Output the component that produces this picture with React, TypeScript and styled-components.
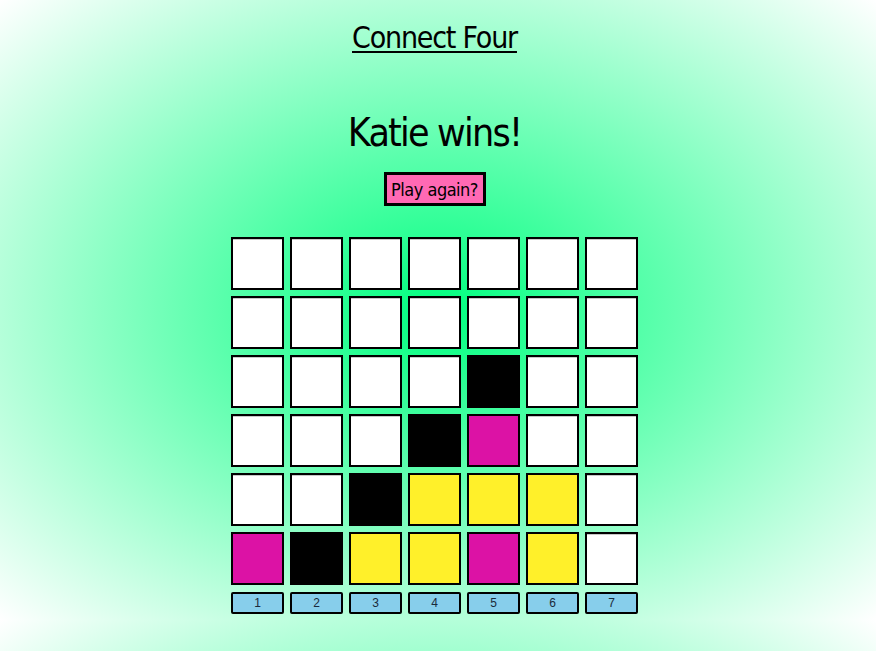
import React from "react";
import styled, { createGlobalStyle } from "styled-components";

const GlobalStyle = createGlobalStyle`
  html {
    min-height: 100%;
    background: radial-gradient(ellipse farthest-corner at 50% 50%, #00ff7f 0%, #ffffff 100%);
    background-size: 100% 620px;
  }
  body {
    margin: 0;
    font-family: "DejaVu Sans", sans-serif;
    font-stretch: condensed;
    color: #000;
  }
`;

const Page = styled.main`
  display: flex;
  flex-direction: column;
  align-items: center;
  padding: 18px 7px 30px 0;
`;

const Title = styled.h1`
  margin: 0;
  font-size: 30px;
  letter-spacing: -1.2px;
  font-weight: 400;
  text-decoration: underline;
  text-decoration-thickness: 2px;
  text-underline-offset: 3px;
  line-height: 40px;
`;

const Status = styled.h2`
  margin: 50px 0 0;
  font-size: 39px;
  letter-spacing: -1.8px;
  font-weight: 400;
  line-height: 50px;
`;

const PlayAgain = styled.button`
  margin-top: 14px;
  width: 102px;
  height: 34px;
  border: 3px solid #000;
  background: #ff69b4;
  font-family: inherit;
  font-stretch: condensed;
  font-size: 18px;
  letter-spacing: -0.5px;
  white-space: nowrap;
  color: #000;
  padding: 0;
  cursor: pointer;
`;

const Board = styled.div`
  margin-top: 31px;
  display: grid;
  grid-template-columns: repeat(7, 53px);
  grid-auto-rows: 53px;
  gap: 6px;
`;

const colors: Record<string, string> = {
  e: "#ffffff",
  b: "#000000",
  m: "#dc12a5",
  y: "#fff02a",
};

const Cell = styled.div<{ $c: string }>`
  box-sizing: border-box;
  border: 2px solid #000;
  background: ${(p) => colors[p.$c]};
  box-shadow: ${(p) => (p.$c === "e" ? "inset 0 1px 0 #c8c8c8" : "none")};
`;

const Controls = styled.div`
  margin-top: 7px;
  display: grid;
  grid-template-columns: repeat(7, 53px);
  gap: 6px;
`;

const ColButton = styled.button`
  box-sizing: border-box;
  height: 22px;
  border: 2px solid #000;
  border-radius: 2px;
  background: #87ceeb;
  font-family: "Liberation Sans", sans-serif;
  font-size: 12px;
  color: #1a2a3a;
  padding: 0;
  cursor: pointer;
`;

const board = [
  "eeeeeee",
  "eeeeeee",
  "eeeebee",
  "eeebmee",
  "eebyyye",
  "mbyymye",
];

export default function App() {
  return (
    <>
      <GlobalStyle />
      <Page>
        <Title>Connect Four</Title>
        <Status>Katie wins!</Status>
        <PlayAgain>Play again?</PlayAgain>
        <Board>
          {board.flatMap((row, r) =>
            row.split("").map((c, i) => <Cell key={`${r}-${i}`} $c={c} />)
          )}
        </Board>
        <Controls>
          {[1, 2, 3, 4, 5, 6, 7].map((n) => (
            <ColButton key={n}>{n}</ColButton>
          ))}
        </Controls>
      </Page>
    </>
  );
}
